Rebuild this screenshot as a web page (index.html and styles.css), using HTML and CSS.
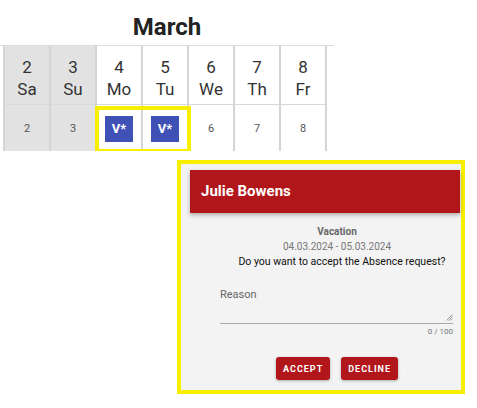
FILE: index.html
```html
<!DOCTYPE html>
<html lang="en">
<head>
<meta charset="utf-8">
<title>Absence request</title>
<link rel="stylesheet" href="styles.css">
</head>
<body>
<div class="calendar">
  <div class="month">March</div>
  <div class="grid-wrap">
    <div class="grid">
      <div class="hcell weekend"><span>2</span><span>Sa</span></div>
      <div class="hcell weekend"><span>3</span><span>Su</span></div>
      <div class="hcell"><span>4</span><span>Mo</span></div>
      <div class="hcell"><span>5</span><span>Tu</span></div>
      <div class="hcell"><span>6</span><span>We</span></div>
      <div class="hcell"><span>7</span><span>Th</span></div>
      <div class="hcell"><span>8</span><span>Fr</span></div>
      <div class="dcell weekend">2</div>
      <div class="dcell weekend">3</div>
      <div class="dcell"><span class="badge">V*</span></div>
      <div class="dcell"><span class="badge">V*</span></div>
      <div class="dcell">6</div>
      <div class="dcell">7</div>
      <div class="dcell">8</div>
    </div>
    <div class="highlight"></div>
  </div>
</div>

<div class="popup">
  <div class="popup-header">Julie Bowens</div>
  <div class="popup-body">
    <div class="type">Vacation</div>
    <div class="dates">04.03.2024 - 05.03.2024</div>
    <div class="question">Do you want to accept the Absence request?</div>
    <div class="field">
      <div class="label">Reason</div>
      <div class="input">
        <svg class="grip" width="7" height="7" viewBox="0 0 7 7">
          <path d="M6.5 0.5 L0.5 6.5 M6.5 2.5 L2.5 6.5 M6.5 4.5 L4.5 6.5" stroke="#888" stroke-width="0.8" fill="none"/>
        </svg>
      </div>
      <div class="counter">0 / 100</div>
    </div>
    <div class="actions">
      <button class="btn">ACCEPT</button>
      <button class="btn">DECLINE</button>
    </div>
  </div>
</div>
</body>
</html>
```

FILE: styles.css
```css
html, body {
  margin: 0;
  padding: 0;
  background: #ffffff;
  font-family: Roboto, "Liberation Sans", Arial, sans-serif;
}

.calendar {
  width: 334px;
}

.month {
  height: 45px;
  box-sizing: border-box;
  padding-top: 9px;
  line-height: 36px;
  text-align: center;
  font-size: 24px;
  font-weight: 700;
  color: #222;
}

.grid-wrap {
  position: relative;
  border-top: 1px solid #dcdcdc;
  padding-left: 3px;
}

.grid {
  display: grid;
  grid-template-columns: repeat(7, 46px);
  border-right: 2px solid #d4d4d4;
  width: max-content;
}

.hcell, .dcell {
  border-left: 2px solid #d4d4d4;
  box-sizing: border-box;
  text-align: center;
}

.hcell {
  height: 59px;
  padding-top: 10px;
  border-bottom: 1px solid #d8d8d8;
  display: flex;
  flex-direction: column;
  font-size: 17px;
  line-height: 22px;
  color: #333;
}

.dcell {
  height: 46px;
  display: flex;
  align-items: center;
  justify-content: center;
  font-size: 11px;
  color: #555;
}

.weekend {
  background: #e2e2e2;
}

.badge {
  display: flex;
  align-items: center;
  justify-content: center;
  width: 28px;
  height: 26px;
  background: #3f51b5;
  color: #fff;
  font-weight: 700;
  font-size: 13px;
  margin-top: 1px;
}

.highlight {
  position: absolute;
  left: 95px;
  top: 60px;
  width: 96px;
  height: 47px;
  box-sizing: border-box;
  border: 4px solid #f8ef00;
}

.popup {
  position: absolute;
  left: 177px;
  top: 160px;
  width: 288px;
  height: 234px;
  box-sizing: border-box;
  border: 4px solid #f8ef00;
  background: #f3f3f3;
  padding: 6px 1px 0 9px;
  display: flex;
  flex-direction: column;
}

.popup-header {
  height: 43px;
  background: #b1161b;
  color: #fff;
  font-size: 15px;
  font-weight: 700;
  line-height: 43px;
  padding-left: 11px;
  box-shadow: 0 2px 4px rgba(0, 0, 0, 0.3);
}

.popup-body {
  padding: 11px 0 0 24px;
  text-align: center;
  font-size: 10px;
  line-height: 15px;
}

.type {
  font-weight: 700;
  color: #666;
}

.dates {
  color: #777;
}

.question {
  color: #111;
  padding-left: 10px;
  font-size: 10.5px;
}

.field {
  margin: 19px 7px 0 6px;
  text-align: left;
}

.label {
  font-size: 11px;
  line-height: 14px;
  color: #666;
}

.input {
  height: 22px;
  border-bottom: 1px solid #aaa;
  display: flex;
  justify-content: flex-end;
  align-items: flex-end;
  padding-bottom: 2px;
  box-sizing: border-box;
}

.grip {
  display: block;
}

.counter {
  text-align: right;
  font-size: 8px;
  line-height: 10px;
  margin-top: 3px;
  color: #777;
}

.actions {
  display: flex;
  justify-content: center;
  gap: 11px;
  margin-top: 20px;
}

.btn {
  height: 23px;
  border: none;
  border-radius: 3px;
  background: #b1161b;
  color: #fff;
  font-family: Roboto, "Liberation Sans", Arial, sans-serif;
  font-size: 9px;
  font-weight: 700;
  letter-spacing: 1px;
  padding: 0 7px;
  box-shadow: 0 1px 3px rgba(0, 0, 0, 0.3);
}
```
